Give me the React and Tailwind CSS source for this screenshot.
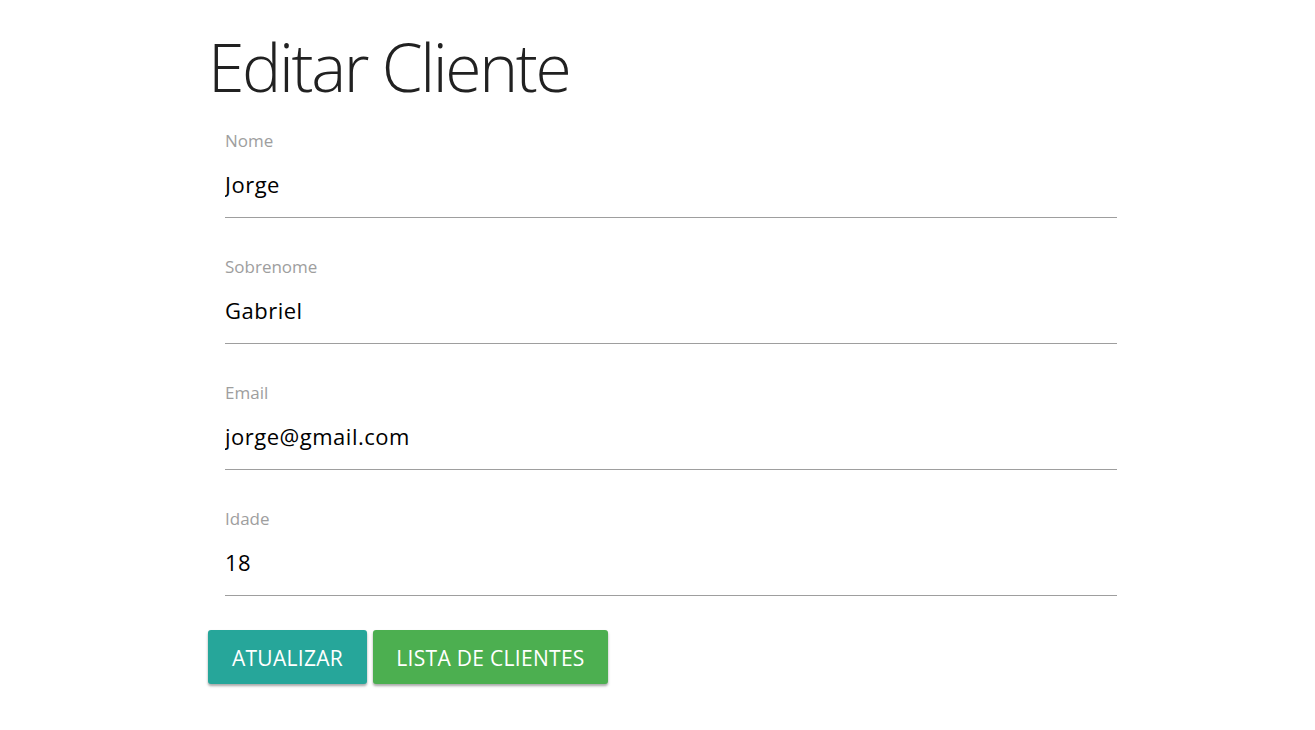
import React from "react";

const fields = [
  { label: "Nome", value: "Jorge" },
  { label: "Sobrenome", value: "Gabriel" },
  { label: "Email", value: "jorge@gmail.com" },
  { label: "Idade", value: "18" },
];

export default function App() {
  return (
    <div className="min-h-[730px] w-full bg-white" style={{ fontFamily: '"Open Sans", "Noto Sans", sans-serif' }}>
      <div className="ml-[208px] w-[909px] pt-[30px]">
        <h1 className="text-[66px] leading-[72px] font-light text-[#212121] tracking-[-2.4px]">Editar Cliente</h1>
        <form className="mt-[28px] flex flex-col gap-[38px] pl-[17px]">
          {fields.map((f) => (
            <div key={f.label} className="flex flex-col">
              <label className="text-[17px] leading-[20px] text-[#9e9e9e] mt-[1px] mb-[-1px]">{f.label}</label>
              <input
                readOnly
                defaultValue={f.value}
                className="mt-[19px] h-[30px] w-full bg-transparent p-0 text-[22px] leading-[30px] tracking-[0.5px] text-black outline-none"
              />
              <div className="mt-[18px] h-px w-full bg-[#9e9e9e]" />
            </div>
          ))}
        </form>
        <div className="mt-[34px] flex gap-[6px]">
          <button className="h-[54px] w-[159px] rounded-[3px] bg-[#26a69a] pt-[3px] text-[21px] tracking-[0.3px] uppercase text-white shadow-[0_2px_3px_rgba(0,0,0,0.25),0_2px_2px_rgba(0,0,0,0.12)]">
            Atualizar
          </button>
          <button className="h-[54px] w-[235px] rounded-[3px] bg-[#4caf50] pt-[3px] text-[21px] tracking-[0.3px] uppercase text-white shadow-[0_2px_3px_rgba(0,0,0,0.25),0_2px_2px_rgba(0,0,0,0.12)]">
            Lista de Clientes
          </button>
        </div>
      </div>
    </div>
  );
}
